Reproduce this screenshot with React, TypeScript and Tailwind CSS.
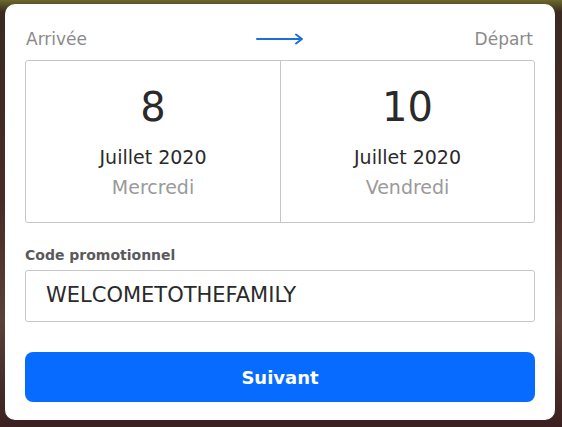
export default function App() {
  return (
    <div className="h-[427px] w-[562px] overflow-hidden bg-[linear-gradient(180deg,#6b6a2a_0px,#3a2a22_12px,#4a2a26_200px,#5a4038_320px,#3a2020_427px)] px-[5px] pt-[4px] font-['DejaVu_Sans',sans-serif]">
      <div className="flex h-[416px] w-[550px] flex-col rounded-[10px] bg-white px-5 pt-[25px]">
        <div className="grid grid-cols-[1fr_auto_1fr] items-center text-[17px] leading-5 text-[#8a8a8a]">
          <span className="ml-px">Arrivée</span>
          <svg width="48" height="12" viewBox="0 0 48 12">
            <path d="M1 6H46M40 1.5L46 6L40 10.5" fill="none" stroke="#1c6ed8" strokeWidth="2" strokeLinecap="round" strokeLinejoin="round" />
          </svg>
          <span className="justify-self-end mr-[2px]">Départ</span>
        </div>
        <div className="mt-[11px] grid h-[163px] grid-cols-2 rounded-[3px] border border-[#c6c6c6]">
          <DateCell day="8" month="Juillet 2020" weekday="Mercredi" />
          <DateCell day="10" month="Juillet 2020" weekday="Vendredi" border />
        </div>
        <label className="mt-[22px] text-[14px] font-semibold leading-5 text-[#5a5a5a]">Code promotionnel</label>
        <div className="mt-[5px] flex h-[52px] items-center rounded-[3px] border border-[#c6c6c6] px-5 text-[21px] text-[#2a2a2a]">
          WELCOMETOTHEFAMILY
        </div>
        <button className="mt-[30px] h-[50px] rounded-[8px] bg-[#086bff] text-[18px] font-bold text-white">
          Suivant
        </button>
      </div>
    </div>
  );
}

function DateCell({ day, month, weekday, border }: { day: string; month: string; weekday: string; border?: boolean }) {
  return (
    <div className={`flex flex-col items-center pt-[21px] ${border ? "border-l border-[#c6c6c6]" : ""}`}>
      <div className="text-[40px] leading-[50px] text-[#2a2a2a]">{day}</div>
      <div className="mt-[13px] text-[19px] leading-6 text-[#2a2a2a]">{month}</div>
      <div className="mt-[6px] text-[19px] leading-6 text-[#9a9a9a]">{weekday}</div>
    </div>
  );
}
